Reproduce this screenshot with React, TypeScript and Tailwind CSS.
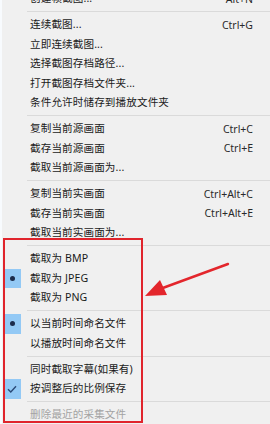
type Item =
  | { sep: true }
  | { label: string; shortcut?: string; mark?: "dot" | "check"; disabled?: boolean };

const items: Item[] = [
  { label: "创建帧截图...", shortcut: "Alt+N" },
  { sep: true },
  { label: "连续截图...", shortcut: "Ctrl+G" },
  { label: "立即连续截图..." },
  { label: "选择截图存档路径..." },
  { label: "打开截图存档文件夹..." },
  { label: "条件允许时储存到播放文件夹" },
  { sep: true },
  { label: "复制当前源画面", shortcut: "Ctrl+C" },
  { label: "截存当前源画面", shortcut: "Ctrl+E" },
  { label: "截取当前源画面为..." },
  { sep: true },
  { label: "复制当前实画面", shortcut: "Ctrl+Alt+C" },
  { label: "截存当前实画面", shortcut: "Ctrl+Alt+E" },
  { label: "截取当前实画面为..." },
  { sep: true },
  { label: "截取为 BMP" },
  { label: "截取为 JPEG", mark: "dot" },
  { label: "截取为 PNG" },
  { sep: true },
  { label: "以当前时间命名文件", mark: "dot" },
  { label: "以播放时间命名文件" },
  { sep: true },
  { label: "同时截取字幕(如果有)" },
  { label: "按调整后的比例保存", mark: "check" },
  { sep: true },
  { label: "删除最近的采集文件", disabled: true },
];

function Mark({ kind }: { kind: "dot" | "check" }) {
  return (
    <div className="absolute left-[3px] top-0 w-[18px] h-full bg-[#93c9f5] flex items-center justify-center">
      {kind === "dot" ? (
        <div className="w-[5px] h-[5px] rounded-full bg-[#1c2c4c]" />
      ) : (
        <svg width="10" height="8" viewBox="0 0 10 8">
          <path d="M1 4.2 L3.8 7 L9 1.2" fill="none" stroke="#2a4a78" strokeWidth="1.4" />
        </svg>
      )}
    </div>
  );
}

export default function App() {
  return (
    <div
      className="relative w-[270px] h-[424px] overflow-hidden bg-[#f0f0f0] text-[#1a1a1a]"
      style={{ fontFamily: '"Noto Sans", "Noto Sans CJK SC", sans-serif' }}
    >
      <div className="absolute left-0 top-0 w-[2px] h-full bg-[#f8fbfe]" />
      <div className="flex flex-col mt-[-11px]">
        {items.map((it, i) =>
          "sep" in it ? (
            <div key={i} className="h-[6.5px] flex items-center pl-[27px]">
              <div className="h-px w-full bg-[#dadada]" />
            </div>
          ) : (
            <div key={i} className="relative h-[19.5px] flex items-center pl-[30px] pr-[17px]">
              {it.mark && <Mark kind={it.mark} />}
              <span
                className={`flex-1 text-[10.6px] leading-none tracking-[0.1px] ${it.disabled ? "text-[#a3a3a3]" : ""}`}
              >
                {it.label}
              </span>
              {it.shortcut && <span className="text-[10.5px] leading-none text-[#2a2a2a]">{it.shortcut}</span>}
            </div>
          )
        )}
      </div>

      <div className="absolute left-[3px] top-[238px] w-[140px] h-[185px] border-2 border-[#e0242c]" />

      <svg className="absolute left-0 top-0" width="270" height="424" viewBox="0 0 270 424">
        <line x1="228" y1="264" x2="160" y2="289" stroke="#e3262c" strokeWidth="2.4" strokeLinecap="round" />
        <polygon points="145,296 160,280 167,295" fill="#e3262c" />
      </svg>
    </div>
  );
}
